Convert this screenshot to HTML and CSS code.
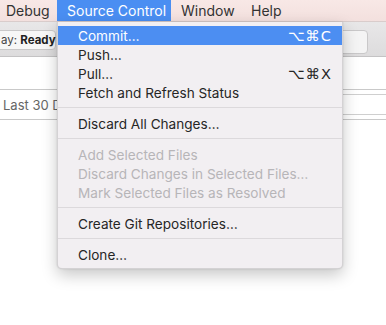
FILE: index.html
```html
<!DOCTYPE html>
<html>
<head>
    <title>Source Control Menu</title>
    <meta name="viewport" content="width=device-width, initial-scale=1">
    <link rel="stylesheet" href="styles.css">
</head>
<body>
    <div class="menubar">
        <div class="menubar-item debug">Debug</div>
        <div class="menubar-item open">Source Control</div>
        <div class="menubar-item window">Window</div>
        <div class="menubar-item">Help</div>
    </div>

    <div class="toolbar">
        <div class="status-box">ay: <strong>Ready</strong></div>
        <div class="search-box"></div>
    </div>

    <div class="content">
        <div class="filter-row">
            <span class="filter-label">Last 30 Days</span>
            <div class="filter-side"></div>
        </div>
    </div>

    <!-- dropdown sits over the window -->
    <div class="menu">
        <div class="item active"><span>Commit…</span><span class="keys">⌥⌘C</span></div>
        <div class="item"><span>Push…</span></div>
        <div class="item"><span>Pull…</span><span class="keys">⌥⌘X</span></div>
        <div class="item"><span>Fetch and Refresh Status</span></div>
        <div class="separator"></div>
        <div class="item"><span>Discard All Changes…</span></div>
        <div class="separator"></div>
        <div class="item disabled"><span>Add Selected Files</span></div>
        <div class="item disabled"><span>Discard Changes in Selected Files…</span></div>
        <div class="item disabled"><span>Mark Selected Files as Resolved</span></div>
        <div class="separator"></div>
        <div class="item"><span>Create Git Repositories…</span></div>
        <div class="separator"></div>
        <div class="item"><span>Clone…</span></div>
    </div>
</body>
</html>
```

FILE: styles.css
```css
body {
    font-family: Inter, 'Liberation Sans', sans-serif;
    margin: 0;
    width: 386px;
    height: 325px;
    overflow: hidden;
    background: white;
    position: relative;
    color: #2b2b2b;
}
.menubar {
    display: flex;
    height: 22px;
    background: linear-gradient(#f8e8e6, #f3e0de);
    border-bottom: 1px solid #d9cccb;
    box-sizing: border-box;
    font-size: 14px;
}
.menubar-item {
    line-height: 22px;
    color: #333;
    box-sizing: border-box;
    white-space: nowrap;
}
.menubar-item.debug {
    width: 57px;
    padding-left: 6px;
}
.menubar-item.open {
    width: 114px;
    padding-left: 10px;
    background: #4a8ef2;
    color: white;
}
.menubar-item.window {
    width: 80px;
    padding-left: 10px;
}
.toolbar {
    height: 35px;
    background: linear-gradient(#e8e7e8, #dddcdd);
    border-bottom: 1px solid #c4c3c4;
    display: flex;
    align-items: flex-start;
    justify-content: space-between;
    padding-top: 8px;
    box-sizing: border-box;
}
.status-box {
    margin-left: -6px;
    width: 62px;
    height: 20px;
    background: #f7f7f7;
    border: 1px solid #c9c8c9;
    border-radius: 4px;
    font-size: 11.5px;
    line-height: 19px;
    padding-left: 6px;
    box-sizing: border-box;
    color: #444;
    white-space: nowrap;
}
.status-box strong {
    color: #222;
}
.search-box {
    width: 120px;
    height: 22px;
    margin-right: 18px;
    background: #f4f4f4;
    border: 1px solid #c9c8c9;
    border-radius: 4px;
}
.content {
    padding-top: 32px;
}
.filter-row {
    display: flex;
    justify-content: space-between;
    align-items: center;
    height: 29px;
    border-top: 1px solid #c9c9c9;
    border-bottom: 1px solid #c9c9c9;
}
.filter-label {
    font-size: 13px;
    color: #666;
    padding-left: 3px;
    white-space: nowrap;
}
.filter-side {
    width: 90px;
    height: 19px;
    border-top: 1px solid #cfcfcf;
    border-bottom: 1px solid #cfcfcf;
}
.menu {
    position: absolute;
    top: 22px;
    left: 57px;
    width: 286px;
    padding: 4px 0;
    box-sizing: border-box;
    background: #f2eff2;
    border: 1px solid rgba(0,0,0,0.12);
    border-top: none;
    border-radius: 0 0 5px 5px;
    box-shadow: 0 6px 16px rgba(0,0,0,0.22), 0 0 2px rgba(0,0,0,0.15);
    font-size: 13.6px;
}
.item {
    display: flex;
    justify-content: space-between;
    align-items: center;
    height: 19px;
    padding: 0 10px 0 20px;
    color: #262626;
}
.item.active {
    background: #4c8ef2;
    color: white;
}
.item.disabled {
    color: #b7b5b8;
}
.keys {
    font-family: 'DejaVu Sans', sans-serif;
    font-size: 14.5px;
    letter-spacing: 1px;
}
.separator {
    height: 1px;
    background: #dcd9dc;
    margin: 5px 0 6px;
}
```
